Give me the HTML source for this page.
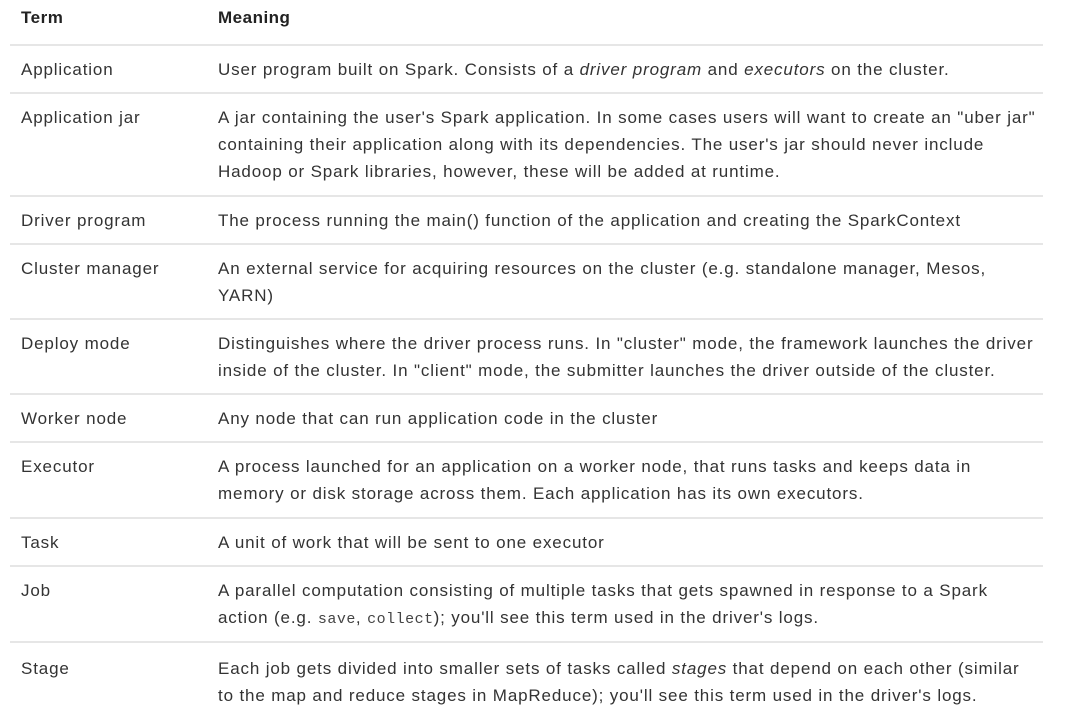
<!DOCTYPE html>
<html><head><meta charset="utf-8"><style>
body{margin:0;background:#fff;width:1088px;height:726px;overflow:hidden;font-family:"Liberation Sans",Arial,sans-serif;color:#333;font-size:17px;letter-spacing:0.85px;}
.r{position:absolute;left:10px;width:1033px;border-top:2px solid #e6e6e6;box-sizing:border-box;}
.t{position:absolute;left:11px;line-height:27px;white-space:nowrap;}
.m{position:absolute;left:208px;line-height:27px;width:840px;white-space:nowrap;}
code{font-family:"Liberation Mono",monospace;font-size:15px;color:#444;letter-spacing:0.5px}
.h{font-weight:bold;color:#222;letter-spacing:0.5px}
</style></head><body>
<div class="r" style="top:-2px;height:47px;border-top:none"><div class="t h" style="top:6px">Term</div><div class="m h" style="top:6px">Meaning</div></div>
<div class="r" style="top:44px"><div class="t" style="top:10px">Application</div><div class="m" style="top:10px">User program built on Spark. Consists of a <i>driver program</i> and <i>executors</i> on the cluster.</div></div>
<div class="r" style="top:92px"><div class="t" style="top:10px">Application jar</div><div class="m" style="top:10px">A jar containing the user's Spark application. In some cases users will want to create an "uber jar"<br>containing their application along with its dependencies. The user's jar should never include<br>Hadoop or Spark libraries, however, these will be added at runtime.</div></div>
<div class="r" style="top:195px"><div class="t" style="top:10px">Driver program</div><div class="m" style="top:10px">The process running the main() function of the application and creating the SparkContext</div></div>
<div class="r" style="top:243px"><div class="t" style="top:10px">Cluster manager</div><div class="m" style="top:10px">An external service for acquiring resources on the cluster (e.g. standalone manager, Mesos,<br>YARN)</div></div>
<div class="r" style="top:318px"><div class="t" style="top:10px">Deploy mode</div><div class="m" style="top:10px">Distinguishes where the driver process runs. In "cluster" mode, the framework launches the driver<br>inside of the cluster. In "client" mode, the submitter launches the driver outside of the cluster.</div></div>
<div class="r" style="top:393px"><div class="t" style="top:10px">Worker node</div><div class="m" style="top:10px">Any node that can run application code in the cluster</div></div>
<div class="r" style="top:441px"><div class="t" style="top:10px">Executor</div><div class="m" style="top:10px">A process launched for an application on a worker node, that runs tasks and keeps data in<br>memory or disk storage across them. Each application has its own executors.</div></div>
<div class="r" style="top:517px"><div class="t" style="top:10px">Task</div><div class="m" style="top:10px">A unit of work that will be sent to one executor</div></div>
<div class="r" style="top:565px"><div class="t" style="top:10px">Job</div><div class="m" style="top:10px">A parallel computation consisting of multiple tasks that gets spawned in response to a Spark<br>action (e.g. <code>save</code>, <code>collect</code>); you'll see this term used in the driver's logs.</div></div>
<div class="r" style="top:641px"><div class="t" style="top:12px">Stage</div><div class="m" style="top:12px">Each job gets divided into smaller sets of tasks called <i>stages</i> that depend on each other (similar<br>to the map and reduce stages in MapReduce); you'll see this term used in the driver's logs.</div></div>
</body></html>
